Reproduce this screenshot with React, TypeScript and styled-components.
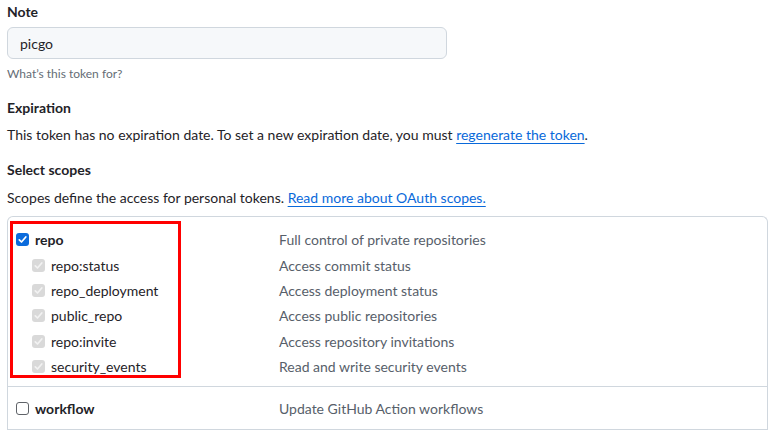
import React from "react";
import styled, { createGlobalStyle } from "styled-components";

const Global = createGlobalStyle`
  html, body { margin: 0; padding: 0; background: #ffffff; }
  body {
    font-family: "Lato", "Noto Sans", sans-serif;
    color: #1f2328;
    font-size: 14px;
    line-height: 1.5;
  }
  * { box-sizing: border-box; }
`;

const Page = styled.div`
  padding: 2px 7px 0 7px;
  width: 775px;
`;

const FieldGroup = styled.div<{ $mb?: number }>`
  margin-bottom: ${(p) => p.$mb ?? 16}px;
`;

const Label = styled.div<{ $mb?: number }>`
  font-weight: 700;
  font-size: 14px;
  line-height: 20px;
  margin-bottom: ${(p) => p.$mb ?? 5}px;
`;

const Input = styled.div`
  width: 440px;
  height: 32px;
  border: 1px solid #d0d7de;
  border-radius: 6px;
  background: #f6f8fa;
  padding: 0 12px;
  display: flex;
  align-items: center;
  font-size: 14px;
`;

const Note = styled.div`
  font-size: 12px;
  color: #656d76;
  margin-top: 6px;
  line-height: 18px;
`;

const Para = styled.p`
  margin: 0;
  font-size: 14px;
  line-height: 21px;
`;

const Link = styled.a`
  color: #0969da;
  text-decoration: underline;
  text-underline-offset: 3px;
`;

const ScopeBox = styled.div`
  position: relative;
  border: 1px solid #d0d7de;
  border-bottom: none;
  border-radius: 6px 6px 0 0;
  margin-top: 8px;
`;

const Group = styled.div<{ $pt: number; $pb: number }>`
  padding: ${(p) => p.$pt}px 8px ${(p) => p.$pb}px 8px;
  border-bottom: 1px solid #d0d7de;
`;

const Row = styled.div<{ $h: number }>`
  display: grid;
  grid-template-columns: 263px 1fr;
  align-items: center;
  height: ${(p) => p.$h}px;
`;

const NameCell = styled.label<{ $sub?: boolean }>`
  display: flex;
  align-items: center;
  gap: 6px;
  padding-left: ${(p) => (p.$sub ? 16 : 0)}px;
  font-weight: ${(p) => (p.$sub ? 400 : 700)};
`;

const Desc = styled.div`
  color: #57606a;
`;

const Box = styled.span<{ $state: "on" | "off" | "dis" }>`
  width: 13px;
  height: 13px;
  border-radius: 3px;
  flex: none;
  display: inline-flex;
  align-items: center;
  justify-content: center;
  background: ${(p) =>
    p.$state === "on" ? "#0b6bdc" : p.$state === "dis" ? "#d9d9d9" : "#ffffff"};
  border: ${(p) => (p.$state === "off" ? "1px solid #5f6368" : "none")};
`;

const Annot = styled.div`
  position: absolute;
  left: 2px;
  top: 4px;
  width: 171px;
  height: 157px;
  border: 3.5px solid #ff0000;
  pointer-events: none;
`;

const Check = ({ state }: { state: "on" | "off" | "dis" }) => (
  <Box $state={state}>
    {state !== "off" && (
      <svg width="11" height="11" viewBox="0 0 11 11">
        <path
          d="M2.3 5.8 L4.5 8 L8.8 3"
          fill="none"
          stroke={state === "on" ? "#ffffff" : "#f2f2f2"}
          strokeWidth="1.7"
          strokeLinecap="round"
          strokeLinejoin="round"
        />
      </svg>
    )}
  </Box>
);

const subs = [
  ["repo:status", "Access commit status"],
  ["repo_deployment", "Access deployment status"],
  ["public_repo", "Access public repositories"],
  ["repo:invite", "Access repository invitations"],
  ["security_events", "Read and write security events"],
];

export default function App() {
  return (
    <>
      <Global />
      <Page>
        <FieldGroup $mb={15}>
          <Label>Note</Label>
          <Input>picgo</Input>
          <Note>What’s this token for?</Note>
        </FieldGroup>
        <FieldGroup $mb={15}>
          <Label $mb={6}>Expiration</Label>
          <Para>
            This token has no expiration date. To set a new expiration date, you must{" "}
            <Link>regenerate the token</Link>.
          </Para>
        </FieldGroup>
        <FieldGroup $mb={0}>
          <Label $mb={7}>Select scopes</Label>
          <Para>
            Scopes define the access for personal tokens.{" "}
            <Link>Read more about OAuth scopes.</Link>
          </Para>
        </FieldGroup>
        <ScopeBox>
          <Group $pt={10} $pb={7}>
            <Row $h={25.4}>
              <NameCell>
                <Check state="on" />
                repo
              </NameCell>
              <Desc>Full control of private repositories</Desc>
            </Row>
            {subs.map(([n, d]) => (
              <Row $h={25.4} key={n}>
                <NameCell $sub>
                  <Check state="dis" />
                  {n}
                </NameCell>
                <Desc>{d}</Desc>
              </Row>
            ))}
          </Group>
          <Group $pt={0} $pb={0}>
            <Row $h={42}>
              <NameCell>
                <Check state="off" />
                workflow
              </NameCell>
              <Desc>Update GitHub Action workflows</Desc>
            </Row>
          </Group>
          <Annot />
        </ScopeBox>
      </Page>
    </>
  );
}
